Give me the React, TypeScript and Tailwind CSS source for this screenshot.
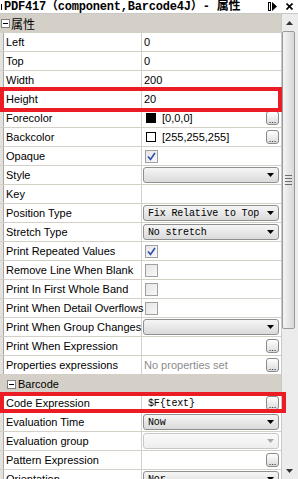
import React from "react";

const SANS = { fontFamily: '"Liberation Sans", Arial, sans-serif' };

function Dots() {
  return (
    <div className="ml-auto mr-[2px] flex h-[14px] w-[13px] items-end justify-center rounded-[3px] border border-[#8a8a8a] bg-gradient-to-b from-[#ffffff] to-[#dcdcdc] pb-[1px]">
      <span className="text-[9px] leading-[6px] text-black" style={{ fontFamily: '"Liberation Sans", sans-serif' }}>...</span>
    </div>
  );
}

function Check({ checked }: { checked?: boolean }) {
  return (
    <div className="ml-[3px] flex h-[13px] w-[13px] items-center justify-center border border-[#a0a0a0] bg-gradient-to-br from-[#e6e6e6] to-[#f8f8f8]">
      {checked && (
        <svg width="9" height="9" viewBox="0 0 9 9">
          <path d="M1 4.5 L3.5 7.5 L8 1" stroke="#2b4fa8" strokeWidth="1.6" fill="none" />
        </svg>
      )}
    </div>
  );
}

function Combo({ text, disabled }: { text?: string; disabled?: boolean }) {
  return (
    <div
      className={
        "ml-[1px] mr-[2px] flex h-[16px] flex-1 items-center rounded-[3px] border " +
        (disabled
          ? "border-[#c8c8c8] bg-gradient-to-b from-[#fafafa] to-[#eeeeee]"
          : "border-[#8e8f8f] bg-gradient-to-b from-[#f6f6f6] to-[#dadada]")
      }
    >
      <span
        className="pl-[4px] text-[10px] tracking-[-0.15px] text-black whitespace-pre"
        style={{ fontFamily: '"Liberation Mono", monospace' }}
      >
        {text}
      </span>
      <svg className="ml-auto mr-[4px]" width="7" height="4" viewBox="0 0 7 4">
        <path d="M0 0 H7 L3.5 4 Z" fill={disabled ? "#a8a8a8" : "#000"} />
      </svg>
    </div>
  );
}

function Row({ name, children }: { name: string; children?: React.ReactNode }) {
  return (
    <div className="flex h-[19px] border-b border-[#d4d0c8]">
      <div className="w-[3px] bg-[#e4e2dc]" />
      <div className="w-[1px] bg-[#a9a9a9]" />
      <div
        className="flex w-[138px] items-center overflow-visible whitespace-nowrap border-r border-[#d4d0c8] pl-[2px] text-[11px] text-black"
        style={SANS}
      >
        {name}
      </div>
      <div className="flex flex-1 items-center" style={SANS}>
        {children}
      </div>
    </div>
  );
}

function Val({ children, grey }: { children: React.ReactNode; grey?: boolean }) {
  return <span className={"pl-[2px] text-[11px] " + (grey ? "text-[#8c8c8c]" : "text-black")}>{children}</span>;
}

function Mono({ children }: { children: React.ReactNode }) {
  return (
    <span className="pl-[6px] text-[10px] tracking-[-0.15px] text-black" style={{ fontFamily: '"Liberation Mono", monospace' }}>
      {children}
    </span>
  );
}

function Minus({ className = "" }: { className?: string }) {
  return (
    <div className={"flex h-[9px] w-[9px] items-center justify-center border border-[#7f7f7f] bg-white " + className}>
      <div className="h-[1px] w-[5px] bg-black" />
    </div>
  );
}

export default function App() {
  return (
    <div className="relative h-[479px] w-[298px] overflow-hidden bg-white">
      {/* title */}
      <div className="flex h-[14px] items-center border-b border-[#c8c8c8] bg-white">
        <div className="ml-[1px] h-[6px] w-[1px] bg-black" />
        <span
          className="ml-[2px] whitespace-pre text-[12px] font-bold leading-none tracking-[-0.2px] text-black"
          style={{ fontFamily: '"Liberation Mono", "Noto Sans CJK SC", monospace' }}
        >
          PDF417（component,Barcode4J）- 属性
        </span>
        <svg className="ml-auto mr-[9px]" width="9" height="9" viewBox="0 0 9 9">
          <rect x="0.5" y="0.5" width="2" height="8" fill="none" stroke="#000" />
          <path d="M4 0 L9 4.5 L4 9 Z" fill="#000" />
        </svg>
        <svg className="mr-[5px]" width="7" height="7" viewBox="0 0 7 7">
          <path d="M0.5 0.5 L6.5 6.5 M6.5 0.5 L0.5 6.5" stroke="#000" strokeWidth="1.6" />
        </svg>
      </div>

      <div className="flex">
        {/* grid */}
        <div className="w-[281px]">
          <div className="flex h-[19px] items-center bg-[#d4d0c8]">
            <Minus className="ml-[1px]" />
            <span className="ml-[1px] text-[12px] text-black" style={{ fontFamily: '"Noto Sans CJK SC", sans-serif' }}>
              属性
            </span>
          </div>
          <Row name="Left"><Val>0</Val></Row>
          <Row name="Top"><Val>0</Val></Row>
          <Row name="Width"><Val>200</Val></Row>
          <Row name="Height"><Val>20</Val></Row>
          <Row name="Forecolor">
            <div className="ml-[4px] h-[10px] w-[10px] bg-black" />
            <span className="pl-[6px] text-[11px] text-black">[0,0,0]</span>
            <Dots />
          </Row>
          <Row name="Backcolor">
            <div className="ml-[4px] h-[10px] w-[10px] border border-black bg-white" />
            <span className="pl-[6px] text-[11px] text-black">[255,255,255]</span>
            <Dots />
          </Row>
          <Row name="Opaque"><Check checked /></Row>
          <Row name="Style"><Combo /></Row>
          <Row name="Key" />
          <Row name="Position Type"><Combo text="Fix Relative to Top" /></Row>
          <Row name="Stretch Type"><Combo text="No stretch" /></Row>
          <Row name="Print Repeated Values"><Check checked /></Row>
          <Row name="Remove Line When Blank"><Check /></Row>
          <Row name="Print In First Whole Band"><Check /></Row>
          <Row name="Print When Detail Overflows"><Check /></Row>
          <Row name="Print When Group Changes"><Combo /></Row>
          <Row name="Print When Expression"><Dots /></Row>
          <Row name="Properties expressions">
            <Val grey>No properties set</Val>
            <Dots />
          </Row>
          <div className="flex h-[19px] items-center bg-[#d4d0c8]">
            <Minus className="ml-[7px]" />
            <span className="ml-[2px] text-[11px] text-black" style={SANS}>Barcode</span>
          </div>
          <Row name="Code Expression">
            <Mono>$F{"{text}"}</Mono>
            <Dots />
          </Row>
          <Row name="Evaluation Time"><Combo text="Now" /></Row>
          <Row name="Evaluation group"><Combo disabled /></Row>
          <Row name="Pattern Expression"><Dots /></Row>
          <Row name="Orientation"><Combo text="Nor" /></Row>
        </div>

        {/* scrollbar */}
        <div className="flex h-[465px] w-[17px] flex-col border-l border-[#c9c9c9] bg-[#ececec]">
          <div className="flex h-[17px] items-center justify-center pr-[2px]">
            <svg width="7" height="4" viewBox="0 0 7 4"><path d="M0 4 H7 L3.5 0 Z" fill="#333" /></svg>
          </div>
          <div className="mr-[3px] flex h-[298px] items-center justify-center rounded-[2px] border border-[#9a9a9a] bg-gradient-to-r from-[#f4f4f4] to-[#d8d8d8]">
            <div className="flex flex-col gap-[2px]">
              <div className="h-[1px] w-[7px] bg-[#6a6a6a]" />
              <div className="h-[1px] w-[7px] bg-[#6a6a6a]" />
              <div className="h-[1px] w-[7px] bg-[#6a6a6a]" />
              <div className="h-[1px] w-[7px] bg-[#6a6a6a]" />
            </div>
          </div>
          <div className="flex-1" />
          <div className="flex h-[16px] items-center justify-center pr-[2px]">
            <svg width="7" height="4" viewBox="0 0 7 4"><path d="M0 0 H7 L3.5 4 Z" fill="#333" /></svg>
          </div>
        </div>
      </div>

      {/* red highlight boxes */}
      <div className="pointer-events-none absolute left-0 top-[87px] h-[25px] w-[282px] border-4 border-[#ec1c24]" />
      <div className="pointer-events-none absolute left-0 top-[392px] h-[21px] w-[286px] border-4 border-[#ec1c24]" />
    </div>
  );
}
